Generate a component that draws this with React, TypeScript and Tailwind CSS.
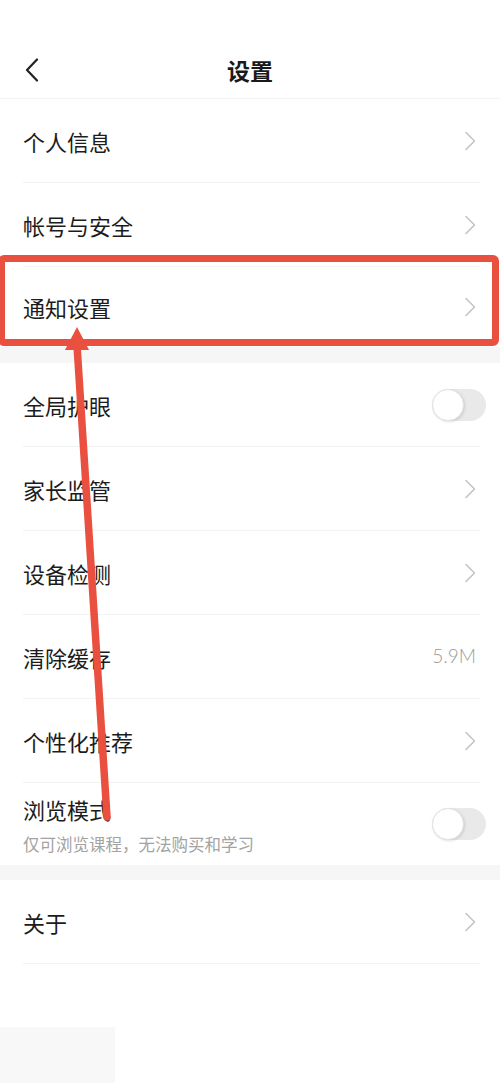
import React from "react";

type Trailing = "chevron" | "toggle" | { value: string };

interface RowProps {
    title: string;
    subtitle?: string;
    trailing: Trailing;
    height?: string;
    divider?: boolean;
}

function Chevron() {
    return (
        <svg width="12" height="20" viewBox="0 0 12 20" className="mr-[10px] shrink-0">
            <polyline points="2,1.5 10.5,10 2,18.5" fill="none" stroke="#c4c4c4" strokeWidth="1.6" strokeLinecap="round" strokeLinejoin="round" />
        </svg>
    );
}

function Toggle() {
    return (
        <div className="relative w-[54px] h-[32px] rounded-full bg-[#e9e9e9] shrink-0">
            <div className="absolute left-0 top-0 w-[32px] h-[32px] rounded-full bg-white border border-[#e2e2e2] shadow-[1px_1px_3px_rgba(0,0,0,0.12)]" />
        </div>
    );
}

function Row({ title, subtitle, trailing, height = "h-[83px]", divider = true }: RowProps) {
    return (
        <>
            <div className={`${height} flex items-center pl-[23px] pr-[14px]`}>
                <div className="flex-1 min-w-0">
                    <div className="text-[22px] leading-[28px] text-[#1c1c1c]">{title}</div>
                    {subtitle && (
                        <div className="text-[16.5px] leading-[20px] mt-[11px] text-[#a3a3a3]">{subtitle}</div>
                    )}
                </div>
                {trailing === "chevron" && <Chevron />}
                {trailing === "toggle" && <Toggle />}
                {typeof trailing === "object" && (
                    <span className="mr-[10px] text-[19px] font-light text-[#9a9a9a] font-['Lato',sans-serif]">{trailing.value}</span>
                )}
            </div>
            {divider && <div className="h-px bg-[#f3f3f3] ml-[23px] mr-[20px]" />}
        </>
    );
}

export default function App() {
    return (
        <div
            className="relative w-[500px] h-[1083px] bg-white overflow-hidden"
            style={{ fontFamily: '"Noto Sans CJK SC", "Noto Sans", sans-serif' }}
        >
            <header className="h-[99px] border-b border-[#f3f3f3] pt-[42px]">
                <div className="relative h-[56px] flex items-center justify-center">
                    <svg width="16" height="24" viewBox="0 0 16 24" className="absolute left-[24px] top-[16px]">
                        <polyline points="13,1.5 3,12 13,22.5" fill="none" stroke="#222" strokeWidth="2.2" strokeLinecap="round" strokeLinejoin="round" />
                    </svg>
                    <h1 className="text-[23px] font-bold text-[#1a1a1a]">设置</h1>
                </div>
            </header>

            <section>
                <Row title="个人信息" trailing="chevron" />
                <Row title="帐号与安全" trailing="chevron" />
                <Row title="通知设置" trailing="chevron" height="h-[80px]" divider={false} />
            </section>

            <div className="h-[16px] bg-[#f6f6f6]" />

            <section>
                <Row title="全局护眼" trailing="toggle" />
                <Row title="家长监管" trailing="chevron" />
                <Row title="设备检测" trailing="chevron" />
                <Row title="清除缓存" trailing={{ value: "5.9M" }} />
                <Row title="个性化推荐" trailing="chevron" />
                <Row
                    title="浏览模式"
                    subtitle="仅可浏览课程，无法购买和学习"
                    trailing="toggle"
                    height="h-[82px]"
                    divider={false}
                />
            </section>

            <div className="h-[15px] bg-[#f6f6f6]" />

            <section>
                <Row title="关于" trailing="chevron" />
            </section>

            <div className="h-[63px]" />
            <div className="w-[115px] h-[56px] bg-[#f8f8f8]" />

            {/* annotation overlay */}
            <div className="absolute left-[-2px] top-[255px] w-[501px] h-[91px] border-[7px] border-[#e9503f] rounded-[6px] pointer-events-none" />
            <svg className="absolute inset-0 pointer-events-none" width="500" height="1083" viewBox="0 0 500 1083">
                <line x1="77" y1="345" x2="107" y2="817" stroke="#e9503f" strokeWidth="7.5" strokeLinecap="round" />
                <polygon points="77,327 65,350 89,350" fill="#e9503f" />
            </svg>
        </div>
    );
}
